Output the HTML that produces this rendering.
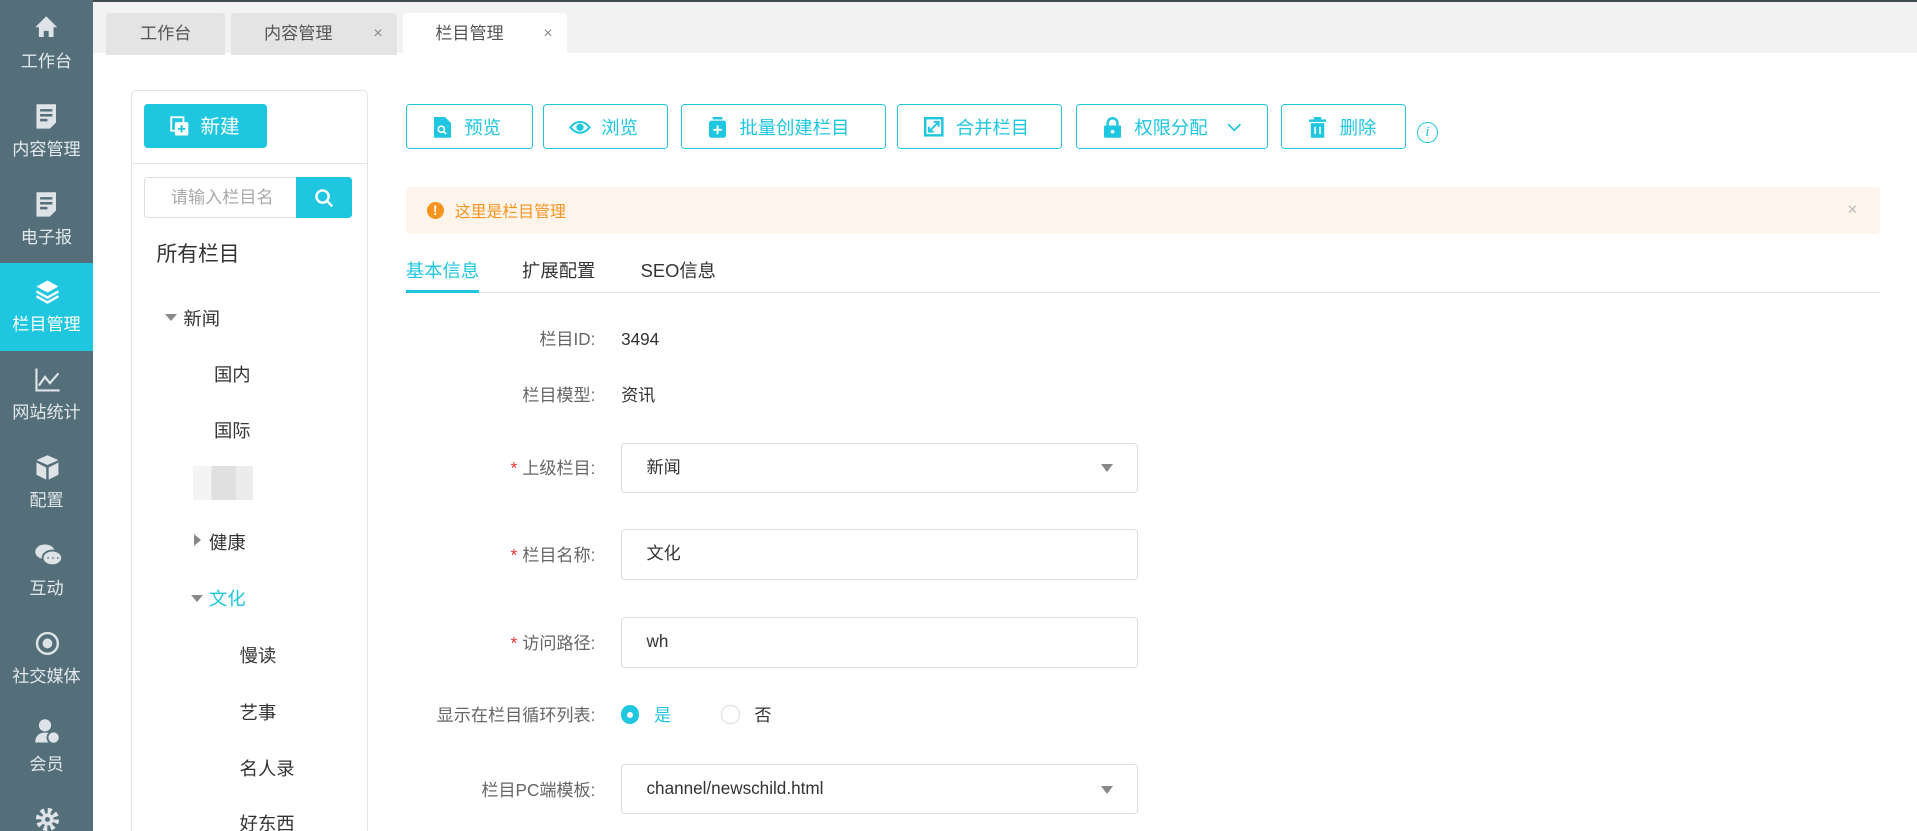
<!DOCTYPE html>
<html><head><meta charset="utf-8"><style>
*{box-sizing:border-box;margin:0;padding:0}
html,body{width:1917px;height:831px;overflow:hidden;background:#fff}
#w{zoom:1.22258;width:1568px;height:680px;overflow:hidden;position:relative;font-family:"Liberation Sans","Noto Sans CJK SC",sans-serif;color:#333;font-size:14px;line-height:20px}
.abs{position:absolute}
#side{left:0;top:0;width:76px;height:680px;background:#546e7a}
.si{position:absolute;left:0;width:76px;height:72px;color:#e3e8ea;font-size:14px;text-align:center}
.si svg{position:absolute;left:28px;top:12px}
.si span{position:absolute;left:0;right:0;top:41px}
.si.on{background:#1fc6e0;color:#fff}
#top{left:76px;top:0;width:1492px;height:43px;background:#f2f2f2;border-top:2px solid #3e4a50}
.tab{position:absolute;top:9px;height:34px;background:#e4e4e4;border-radius:3px 3px 0 0;font-size:14px;color:#555;line-height:34px}
.tab i{position:absolute;right:12px;font-style:normal;color:#888;font-size:13px}
#lp{left:107px;top:74px;width:194px;height:606px;border:1px solid #e5e5e5;border-bottom:none;border-radius:4px 4px 0 0}
.btn{position:absolute;top:85px;height:37px;border:1px solid #1fc6e0;border-radius:3px;color:#1fc6e0;font-size:15px;line-height:37px}
.btn svg{position:absolute;top:10px}
.tr{position:absolute;font-size:15px;color:#333}
.lab{position:absolute;right:1081px;text-align:right;color:#666;font-size:14px;width:200px}
.lab b{color:#e33;font-weight:normal;margin-right:4px}
.inp{position:absolute;left:508px;width:423px;height:41px;border:1px solid #ddd;border-radius:3px;padding-left:20px;line-height:40px;font-size:14px;color:#333}
.car{position:absolute;right:20px;top:17px;border-left:5px solid transparent;border-right:5px solid transparent;border-top:7px solid #888}
</style></head><body><div id="w">
<div id="side" class="abs">
<div class="si" style="top:0"><svg width="20" height="20" viewBox="0 0 20 20"><path d="M10 1L1 10h3v8h4v-5h4v5h4v-8h3z" fill="#dde3e6"/></svg><span>工作台</span></div>
<div class="si" style="top:72px"><svg width="20" height="22" viewBox="0 0 20 22"><path d="M2 1h16v15l-5 5H2z" fill="#dde3e6"/><path d="M5 6h10M5 10h10M5 14h6" stroke="#546e7a" stroke-width="2"/></svg><span>内容管理</span></div>
<div class="si" style="top:144px"><svg width="20" height="22" viewBox="0 0 20 22"><path d="M2 1h16v15l-5 5H2z" fill="#dde3e6"/><path d="M5 6h10M5 10h10M5 14h6" stroke="#546e7a" stroke-width="2"/></svg><span>电子报</span></div>
<div class="si on" style="top:215px"><svg width="22" height="22" viewBox="0 0 22 22"><path d="M11 2L2 7l9 5 9-5z" fill="#fff"/><path d="M2 11l9 5 9-5M2 15l9 5 9-5" stroke="#fff" stroke-width="2" fill="none"/></svg><span>栏目管理</span></div>
<div class="si" style="top:287px"><svg width="22" height="22" viewBox="0 0 22 22"><path d="M2 2v18h19M4 16l5-7 4 5 7-8" stroke="#dde3e6" stroke-width="1.8" fill="none"/></svg><span>网站统计</span></div>
<div class="si" style="top:359px"><svg width="22" height="22" viewBox="0 0 22 22"><path d="M11 1l9 4-9 4-9-4zM2 7l8 4v10l-8-4zM20 7l-8 4v10l8-4z" fill="#dde3e6"/></svg><span>配置</span></div>
<div class="si" style="top:431px"><svg width="24" height="22" viewBox="0 0 24 22"><ellipse cx="9" cy="8" rx="8" ry="6" fill="#dde3e6"/><ellipse cx="15" cy="13" rx="8" ry="6" fill="#dde3e6" stroke="#546e7a" stroke-width="1.5"/><path d="M11 13h1M15 13h1M19 13h1" stroke="#546e7a" stroke-width="1.5"/></svg><span>互动</span></div>
<div class="si" style="top:503px"><svg width="22" height="22" viewBox="0 0 22 22"><circle cx="11" cy="11" r="8.5" stroke="#dde3e6" stroke-width="2" fill="none"/><circle cx="11" cy="11" r="4" fill="#dde3e6"/></svg><span>社交媒体</span></div>
<div class="si" style="top:575px"><svg width="22" height="22" viewBox="0 0 22 22"><circle cx="9" cy="6" r="5" fill="#dde3e6"/><path d="M1 20c0-6 4-8 8-8s6 1 7 3v5z" fill="#dde3e6"/><circle cx="16" cy="16" r="5" fill="#dde3e6" stroke="#546e7a" stroke-width="1.5"/></svg><span>会员</span></div>
<div class="si" style="top:647px"><svg width="22" height="22" viewBox="0 0 22 22"><circle cx="11" cy="11" r="7" fill="none" stroke="#dde3e6" stroke-width="5" stroke-dasharray="3 2.5"/><circle cx="11" cy="11" r="5" fill="#dde3e6"/><circle cx="11" cy="11" r="2" fill="#546e7a"/></svg></div>
</div>
<div id="top" class="abs">
<div class="tab" style="left:11px;width:97px;text-align:center">工作台</div>
<div class="tab" style="left:113px;width:136px;padding-left:27px">内容管理<i>×</i></div>
<div class="tab" style="left:254px;width:134px;padding-left:26px;background:#fff">栏目管理<i>×</i></div>
</div>
<div id="lp" class="abs"></div>
<div class="abs" style="left:118px;top:85px;width:100px;height:36px;background:#1fc6e0;border-radius:3px;color:#fff;font-size:16px;line-height:38px;padding-left:46px">新建<svg class="abs" style="left:21px;top:10px" width="16" height="17" viewBox="0 0 16 17"><rect x="1" y="1" width="10" height="11" fill="none" stroke="#fff" stroke-width="1.5"/><rect x="4" y="5" width="11" height="11" rx="1" fill="#fff"/><path d="M9.5 7.5v6M6.5 10.5h6" stroke="#1fc6e0" stroke-width="1.6"/></svg></div>
<div class="abs" style="left:108px;top:133px;width:192px;height:1px;background:#e5e5e5"></div>
<div class="abs" style="left:118px;top:145px;width:170px;height:33px;border:1px solid #ddd;border-radius:3px;color:#aaa;font-size:14px;line-height:32px;padding-left:21px">请输入栏目名</div>
<div class="abs" style="left:242px;top:145px;width:46px;height:33px;background:#1fc6e0;border-radius:0 3px 3px 0"><svg class="abs" style="left:15px;top:9px" width="16" height="16" viewBox="0 0 16 16"><circle cx="7" cy="7" r="5" stroke="#fff" stroke-width="2" fill="none"/><path d="M11 11l4 4" stroke="#fff" stroke-width="2"/></svg></div>
<div class="tr" style="left:128px;top:199px;font-size:17px">所有栏目</div>
<div class="abs" style="left:135px;top:257px;border-left:5px solid transparent;border-right:5px solid transparent;border-top:6px solid #888"></div>
<div class="tr" style="left:150px;top:251px">新闻</div>
<div class="tr" style="left:175px;top:297px">国内</div>
<div class="tr" style="left:175px;top:343px">国际</div>
<div class="abs" style="left:158px;top:381px;width:49px;height:28px;background:linear-gradient(90deg,#f4f4f4 0 15px,#e0e0e0 15px 35px,#ececec 35px);"></div>
<div class="abs" style="left:159px;top:437px;border-top:5px solid transparent;border-bottom:5px solid transparent;border-left:6px solid #888"></div>
<div class="tr" style="left:171px;top:434px">健康</div>
<div class="abs" style="left:156px;top:487px;border-left:5px solid transparent;border-right:5px solid transparent;border-top:6px solid #888"></div>
<div class="tr" style="left:171px;top:480px;color:#1fc6e0">文化</div>
<div class="tr" style="left:196px;top:527px">慢读</div>
<div class="tr" style="left:196px;top:573px">艺事</div>
<div class="tr" style="left:196px;top:619px">名人录</div>
<div class="tr" style="left:196px;top:664px">好东西</div>

<div class="btn" style="left:332px;width:104px;padding-left:47px">预览<svg style="left:22px" width="14" height="17" viewBox="0 0 14 17"><path d="M0 0h9l5 5v12H0z" fill="#1fc6e0"/><circle cx="6" cy="10" r="2.5" stroke="#fff" stroke-width="1.3" fill="none"/><path d="M8 12l2 2" stroke="#fff" stroke-width="1.3"/></svg></div>
<div class="btn" style="left:444px;width:102px;padding-left:47px">浏览<svg style="left:21px;top:12px" width="18" height="12" viewBox="0 0 18 12"><path d="M1 6Q9-3 17 6Q9 15 1 6z" fill="none" stroke="#1fc6e0" stroke-width="1.6"/><circle cx="9" cy="6" r="3" fill="#1fc6e0"/></svg></div>
<div class="btn" style="left:557px;width:168px;padding-left:47px">批量创建栏目<svg style="left:22px" width="14" height="17" viewBox="0 0 14 17"><rect x="3" y="0" width="8" height="2" fill="#1fc6e0"/><rect x="0" y="3" width="14" height="14" rx="2" fill="#1fc6e0"/><path d="M7 7v7M3.5 10.5h7" stroke="#fff" stroke-width="1.5"/></svg></div>
<div class="btn" style="left:734px;width:135px;padding-left:47px">合并栏目<svg style="left:21px" width="16" height="16" viewBox="0 0 16 16"><rect x="1" y="1" width="14" height="14" fill="none" stroke="#1fc6e0" stroke-width="2"/><path d="M4 12l8-8M8 4h4v4M4 8v4h4" stroke="#1fc6e0" stroke-width="1.6" fill="none"/></svg></div>
<div class="btn" style="left:880px;width:157px;padding-left:47px">权限分配<svg style="left:123px;top:15px" width="12" height="8" viewBox="0 0 12 8"><path d="M1 1l5 5 5-5" stroke="#1fc6e0" stroke-width="1.4" fill="none"/></svg><svg style="left:22px" width="14" height="17" viewBox="0 0 14 17"><path d="M3 8V5a4 4 0 0 1 8 0v3" stroke="#1fc6e0" stroke-width="2" fill="none"/><rect x="0" y="7" width="14" height="10" rx="1" fill="#1fc6e0"/><circle cx="7" cy="12" r="1.5" fill="#fff"/></svg></div>
<div class="btn" style="left:1048px;width:102px;padding-left:47px">删除<svg style="left:22px" width="14" height="17" viewBox="0 0 14 17"><rect x="0" y="2" width="14" height="2" fill="#1fc6e0"/><rect x="4" y="0" width="6" height="2" fill="#1fc6e0"/><rect x="1.5" y="5" width="11" height="12" fill="#1fc6e0"/><path d="M5 8v6M9 8v6" stroke="#fff" stroke-width="1.3"/></svg></div>
<div class="abs" style="left:1159px;top:100px;width:17px;height:17px;border:1.3px solid #1fc6e0;border-radius:50%;color:#1fc6e0;font-size:12px;font-style:italic;text-align:center;line-height:15px;font-family:'Liberation Serif',serif">i</div>

<div class="abs" style="left:332px;top:153px;width:1206px;height:38px;background:#fdf5ec;border-radius:3px"></div>
<div class="abs" style="left:349px;top:165px;width:14px;height:14px;border-radius:50%;background:#f7931e;color:#fff;font-size:11px;font-weight:bold;text-align:center;line-height:14px">!</div>
<div class="abs" style="left:372px;top:164px;color:#f7931e;font-size:13px">这里是栏目管理</div>
<div class="abs" style="left:1511px;top:162px;color:#bbb;font-size:14px">×</div>

<div class="abs" style="left:332px;top:212px;font-size:15px;color:#1fc6e0">基本信息</div>
<div class="abs" style="left:427px;top:212px;font-size:15px;color:#333">扩展配置</div>
<div class="abs" style="left:524px;top:212px;font-size:15px;color:#333">SEO信息</div>
<div class="abs" style="left:332px;top:239px;width:1206px;height:1px;background:#e5e5e5"></div>
<div class="abs" style="left:332px;top:237px;width:60px;height:3px;background:#1fc6e0"></div>

<div class="lab" style="top:268px">栏目ID:</div><div class="abs" style="left:508px;top:268px;font-size:14px">3494</div>
<div class="lab" style="top:314px">栏目模型:</div><div class="abs" style="left:508px;top:314px;font-size:14px">资讯</div>
<div class="lab" style="top:374px"><b>*</b>上级栏目:</div><div class="inp" style="top:362px">新闻<div class="car"></div></div>
<div class="lab" style="top:445px"><b>*</b>栏目名称:</div><div class="inp" style="top:433px">文化</div>
<div class="lab" style="top:517px"><b>*</b>访问路径:</div><div class="inp" style="top:505px">wh</div>
<div class="lab" style="top:576px">显示在栏目循环列表:</div>
<div class="abs" style="left:508px;top:577px;width:15px;height:15px;border-radius:50%;background:#1fc6e0"><div class="abs" style="left:5px;top:5px;width:5px;height:5px;border-radius:50%;background:#fff"></div></div>
<div class="abs" style="left:535px;top:576px;color:#1fc6e0">是</div>
<div class="abs" style="left:590px;top:577px;width:15px;height:15px;border-radius:50%;border:1px solid #ddd"></div>
<div class="abs" style="left:617px;top:576px">否</div>
<div class="lab" style="top:637px">栏目PC端模板:</div><div class="inp" style="top:625px">channel/newschild.html<div class="car"></div></div>
</div></body></html>
